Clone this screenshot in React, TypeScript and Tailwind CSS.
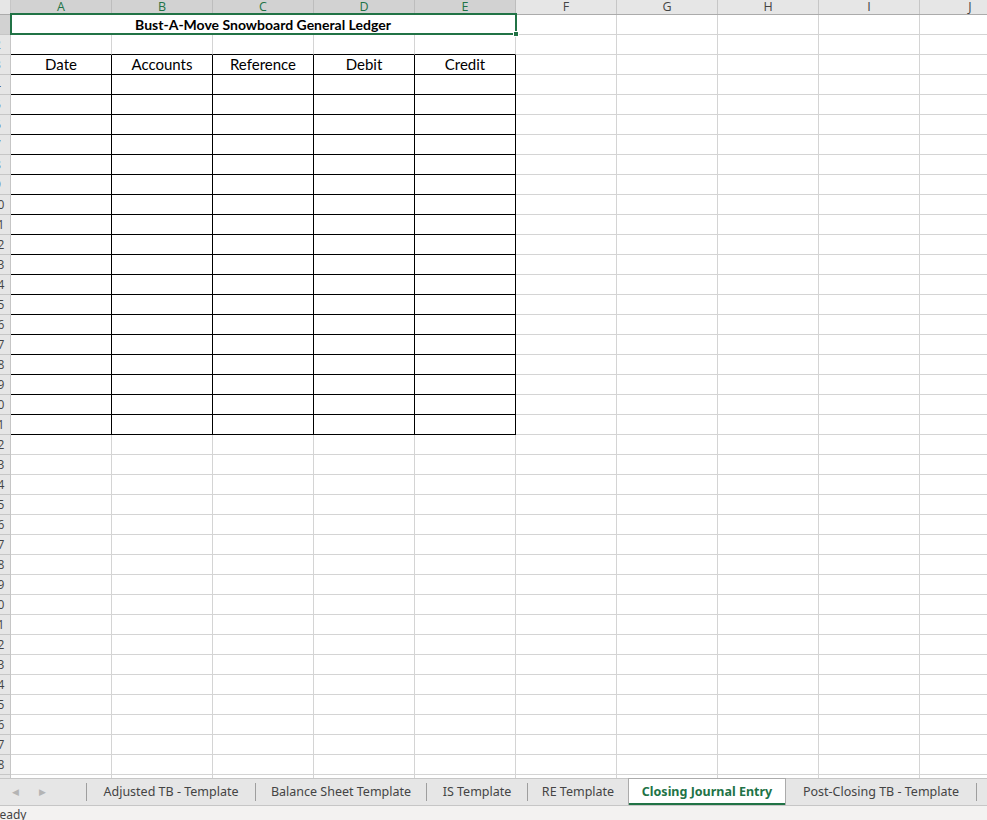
import React from 'react'

const COLS = ['A', 'B', 'C', 'D', 'E', 'F', 'G', 'H', 'I', 'J']
const ROW_COUNT = 39

const tabs = [
    { name: 'Adjusted TB - Template', w: 'w-[168px]' },
    { name: 'Balance Sheet Template', w: 'w-[170px]' },
    { name: 'IS Template', w: 'w-[100px]' },
    { name: 'RE Template', w: 'w-[100px]' },
    { name: 'Closing Journal Entry', w: 'w-[158px]', active: true },
    { name: 'Post-Closing TB - Template', w: 'w-[190px]' },
]

function ColumnHeader() {
    return (
        <div className="flex h-[15px] shrink-0 border-b border-[#ababab] bg-[#e6e6e6] font-['Open_Sans',sans-serif]">
            <div className="w-[11px] shrink-0 border-r border-[#c6c6c6]" />
            {COLS.map((c, i) => (
                <div
                    key={c}
                    className={
                        'flex w-[101px] shrink-0 items-center justify-center border-r text-[12.5px] leading-none ' +
                        (i < 5
                            ? 'border-[#bdbdbd] bg-[#d2d2d2] text-[#217346]'
                            : 'border-[#c6c6c6] text-[#444444]')
                    }
                >
                    {c}
                </div>
            ))}
        </div>
    )
}

function RowHeader({ n }: { n: number }) {
    return (
        <div
            className={
                'relative h-[20px] w-[11px] shrink-0 overflow-hidden border-r border-b border-[#c6c6c6] font-["Open_Sans",sans-serif] ' +
                (n === 1 ? 'bg-[#d2d2d2] text-[#217346]' : 'bg-[#e6e6e6] text-[#444444]')
            }
        >
            <div className="absolute top-0 left-[-15px] flex h-[19px] w-[25px] items-center justify-center text-[12px]">
                {n}
            </div>
        </div>
    )
}

function GridRow({ n }: { n: number }) {
    const tableHeader = ['Date', 'Accounts', 'Reference', 'Debit', 'Credit']
    const inTable = n >= 3 && n <= 21

    if (n === 1) {
        return (
            <div className="flex">
                <RowHeader n={n} />
                <div className="relative flex h-[20px] w-[505px] shrink-0 items-center justify-center border-r border-b border-[#d4d4d4] text-[14px] font-bold text-black">
                    Bust-A-Move Snowboard General Ledger
                    {/* selection outline */}
                    <div className="pointer-events-none absolute top-[-2px] left-[-1px] h-[22px] w-[507px] border-2 border-[#217346]" />
                    <div className="absolute right-[-4px] bottom-[-3px] h-[6px] w-[6px] border border-white bg-[#217346]" />
                </div>
                {COLS.slice(5).map((c) => (
                    <div key={c} className="h-[20px] w-[101px] shrink-0 border-r border-b border-[#d4d4d4]" />
                ))}
            </div>
        )
    }

    return (
        <div className="flex">
            <RowHeader n={n} />
            {COLS.map((c, i) => {
                const black = inTable && i < 5
                const topEdge = n === 2 && i < 5
                return (
                    <div
                        key={c}
                        className={
                            'flex h-[20px] w-[101px] shrink-0 items-center justify-center border-r border-b text-[15px] text-black ' +
                            (black
                                ? 'border-black'
                                : topEdge
                                  ? 'border-r-[#d4d4d4] border-b-black'
                                  : 'border-[#d4d4d4]')
                        }
                    >
                        {n === 3 && i < 5 ? tableHeader[i] : ''}
                    </div>
                )
            })}
        </div>
    )
}

function Separator() {
    return <div className="my-auto h-[18px] w-px shrink-0 bg-[#9e9e9e]" />
}

function SheetTabs() {
    return (
        <div className="flex h-[28px] shrink-0 border-t border-[#c6c6c6] border-b border-b-[#c6c6c6] bg-[#e6e6e6] font-['Segoe_UI','Noto_Sans',sans-serif] text-[12.5px] text-[#444444]">
            <div className="flex w-[86px] shrink-0 items-center gap-[20px] pl-[12px] text-[9px] text-[#b4b4b4]">
                <span>&#9664;</span>
                <span>&#9654;</span>
            </div>
            <Separator />
            {tabs.map((t) =>
                t.active ? (
                    <div
                        key={t.name}
                        className={
                            t.w +
                            ' relative -mt-px flex shrink-0 items-center justify-center border-x border-t border-[#ababab] bg-white font-bold text-[#217346]'
                        }
                    >
                        {t.name}
                        <div className="absolute right-0 bottom-0 left-0 h-[2px] bg-[#217346]" />
                    </div>
                ) : (
                    <React.Fragment key={t.name}>
                        <div className={t.w + ' flex shrink-0 items-center justify-center'}>{t.name}</div>
                        {t.name !== 'RE Template' && <Separator />}
                    </React.Fragment>
                )
            )}
        </div>
    )
}

export default function App() {
    return (
        <div className="flex h-[820px] w-[987px] flex-col overflow-hidden bg-white font-['Segoe_UI','Noto_Sans',sans-serif]">
            <div className="flex flex-1 flex-col overflow-hidden font-['Lato',sans-serif]">
                <ColumnHeader />
                {Array.from({ length: ROW_COUNT }, (_, i) => (
                    <GridRow key={i} n={i + 1} />
                ))}
            </div>
            <SheetTabs />
            <div className="h-[14px] shrink-0 overflow-hidden bg-[#f3f2f1] text-[12px] leading-[18px] text-[#444444]">
                <span className="ml-[-8px]">Ready</span>
            </div>
        </div>
    )
}
